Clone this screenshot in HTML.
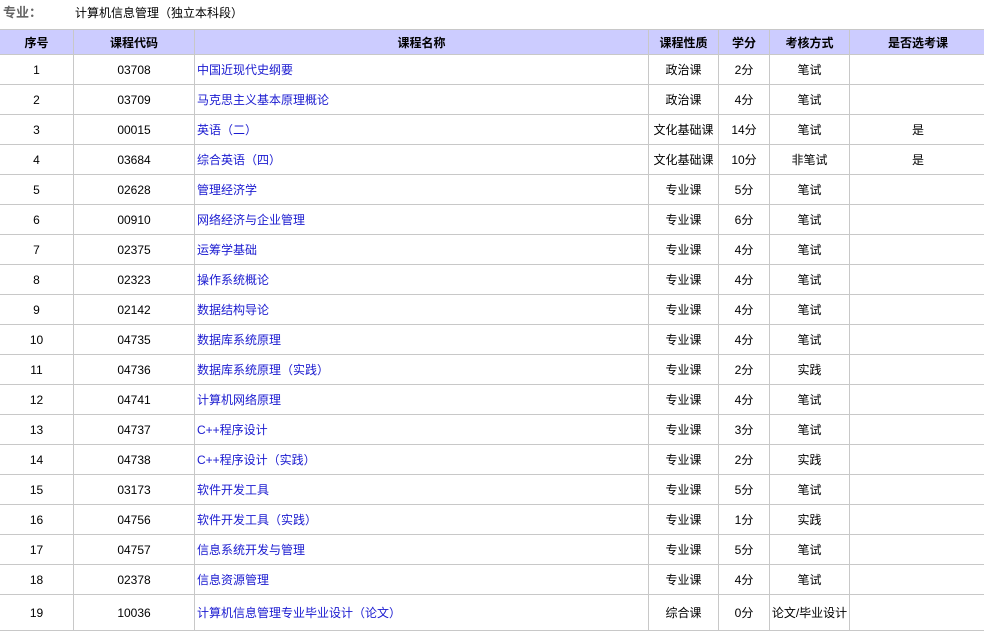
<!DOCTYPE html>
<html><head><meta charset="utf-8"><style>
body{margin:0;width:984px;height:630px;overflow:hidden;background:#fff;font-family:"Liberation Sans","Noto Sans CJK SC",sans-serif;font-size:12px;color:#000}
.top{position:absolute;top:4px;left:3px;height:18px;line-height:18px}
.top b{color:#666;font-size:13px;display:inline-block;width:72px}
table{position:absolute;top:29px;left:-1px;border-collapse:collapse;table-layout:fixed;width:987px}
td,th{border:1px solid #c8c8c8;text-align:center;padding:0;height:29px}
th{background:#ccccff;font-weight:bold;height:24px}
td.n{text-align:left;color:#1a1ad0;padding-left:2px}
tr.last td{height:35px}
</style></head><body>
<div class="top"><b>专业：</b>计算机信息管理（独立本科段）</div>
<table>
<colgroup><col style="width:74px"><col style="width:121px"><col style="width:454px"><col style="width:70px"><col style="width:51px"><col style="width:80px"><col style="width:137px"></colgroup>
<tr><th>序号</th><th>课程代码</th><th>课程名称</th><th>课程性质</th><th>学分</th><th>考核方式</th><th>是否选考课</th></tr>
<tr><td>1</td><td>03708</td><td class="n">中国近现代史纲要</td><td>政治课</td><td>2分</td><td>笔试</td><td></td></tr>
<tr><td>2</td><td>03709</td><td class="n">马克思主义基本原理概论</td><td>政治课</td><td>4分</td><td>笔试</td><td></td></tr>
<tr><td>3</td><td>00015</td><td class="n">英语（二）</td><td>文化基础课</td><td>14分</td><td>笔试</td><td>是</td></tr>
<tr><td>4</td><td>03684</td><td class="n">综合英语（四）</td><td>文化基础课</td><td>10分</td><td>非笔试</td><td>是</td></tr>
<tr><td>5</td><td>02628</td><td class="n">管理经济学</td><td>专业课</td><td>5分</td><td>笔试</td><td></td></tr>
<tr><td>6</td><td>00910</td><td class="n">网络经济与企业管理</td><td>专业课</td><td>6分</td><td>笔试</td><td></td></tr>
<tr><td>7</td><td>02375</td><td class="n">运筹学基础</td><td>专业课</td><td>4分</td><td>笔试</td><td></td></tr>
<tr><td>8</td><td>02323</td><td class="n">操作系统概论</td><td>专业课</td><td>4分</td><td>笔试</td><td></td></tr>
<tr><td>9</td><td>02142</td><td class="n">数据结构导论</td><td>专业课</td><td>4分</td><td>笔试</td><td></td></tr>
<tr><td>10</td><td>04735</td><td class="n">数据库系统原理</td><td>专业课</td><td>4分</td><td>笔试</td><td></td></tr>
<tr><td>11</td><td>04736</td><td class="n">数据库系统原理（实践）</td><td>专业课</td><td>2分</td><td>实践</td><td></td></tr>
<tr><td>12</td><td>04741</td><td class="n">计算机网络原理</td><td>专业课</td><td>4分</td><td>笔试</td><td></td></tr>
<tr><td>13</td><td>04737</td><td class="n">C++程序设计</td><td>专业课</td><td>3分</td><td>笔试</td><td></td></tr>
<tr><td>14</td><td>04738</td><td class="n">C++程序设计（实践）</td><td>专业课</td><td>2分</td><td>实践</td><td></td></tr>
<tr><td>15</td><td>03173</td><td class="n">软件开发工具</td><td>专业课</td><td>5分</td><td>笔试</td><td></td></tr>
<tr><td>16</td><td>04756</td><td class="n">软件开发工具（实践）</td><td>专业课</td><td>1分</td><td>实践</td><td></td></tr>
<tr><td>17</td><td>04757</td><td class="n">信息系统开发与管理</td><td>专业课</td><td>5分</td><td>笔试</td><td></td></tr>
<tr><td>18</td><td>02378</td><td class="n">信息资源管理</td><td>专业课</td><td>4分</td><td>笔试</td><td></td></tr>
<tr class="last"><td>19</td><td>10036</td><td class="n">计算机信息管理专业毕业设计（论文）</td><td>综合课</td><td>0分</td><td style="line-height:16px">论文/毕业设计</td><td></td></tr>
</table>
</body></html>
